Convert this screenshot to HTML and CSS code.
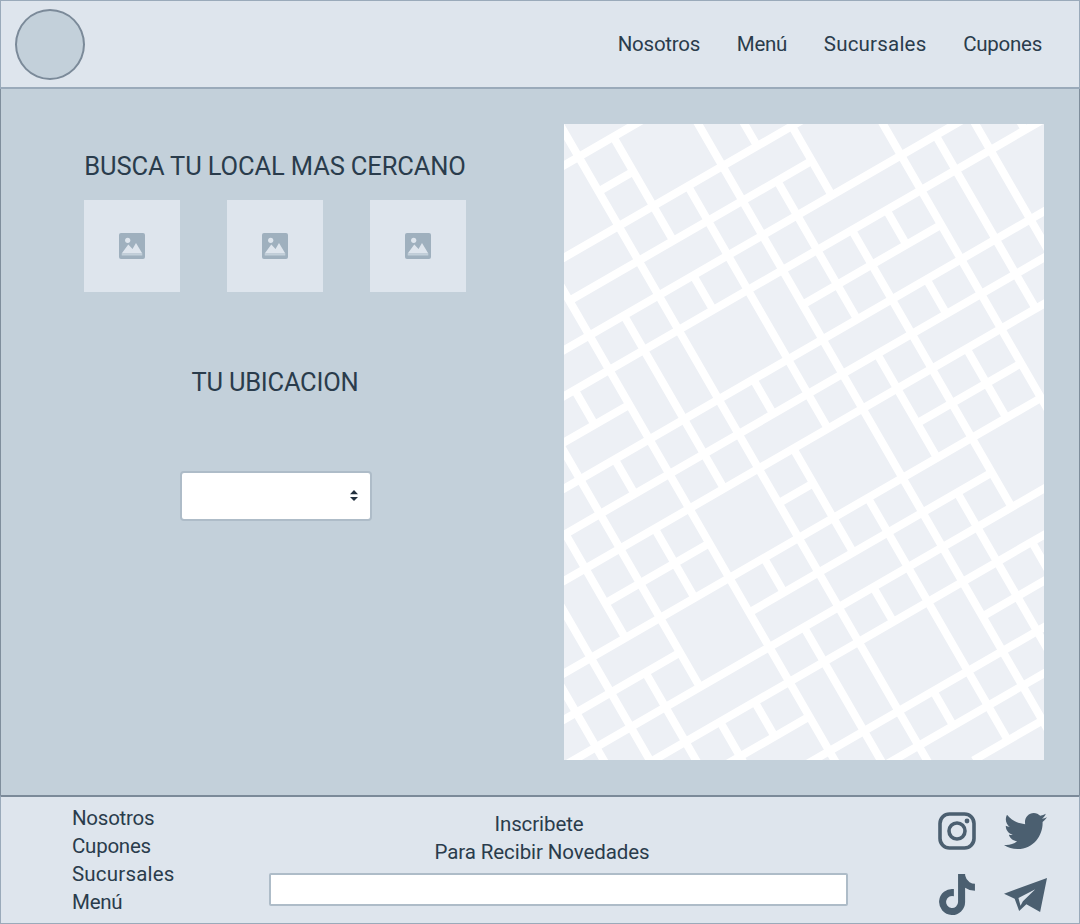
FILE: index.html
```html
<!DOCTYPE html>
<html lang="es">
<head>
<meta charset="utf-8">
<title>Sucursales</title>
<link rel="stylesheet" href="styles.css">
</head>
<body>
<div class="page">
  <header class="topbar">
    <div class="logo"></div>
    <nav class="nav">
      <a>Nosotros</a>
      <a>Menú</a>
      <a class="wide">Sucursales</a>
      <a>Cupones</a>
    </nav>
  </header>
  <main class="main">
    <section class="finder">
      <div class="search-block">
        <h2 class="title">BUSCA TU LOCAL MAS CERCANO</h2>
        <div class="thumbs">
          <div class="thumb"><svg class="thumb-icon" viewBox="0 0 26 26"><rect width="26" height="26" rx="2" fill="#9fb0be"/><circle cx="8.7" cy="7.3" r="2.6" fill="#dee5ed"/><path d="M2.7 20.5 9.3 11.5 13.5 16 17 10 23.3 20.5z" fill="#dee5ed"/><rect x="2.7" y="20.5" width="20.6" height="2" fill="#c3d0da"/></svg></div>
          <div class="thumb"><svg class="thumb-icon" viewBox="0 0 26 26"><rect width="26" height="26" rx="2" fill="#9fb0be"/><circle cx="8.7" cy="7.3" r="2.6" fill="#dee5ed"/><path d="M2.7 20.5 9.3 11.5 13.5 16 17 10 23.3 20.5z" fill="#dee5ed"/><rect x="2.7" y="20.5" width="20.6" height="2" fill="#c3d0da"/></svg></div>
          <div class="thumb"><svg class="thumb-icon" viewBox="0 0 26 26"><rect width="26" height="26" rx="2" fill="#9fb0be"/><circle cx="8.7" cy="7.3" r="2.6" fill="#dee5ed"/><path d="M2.7 20.5 9.3 11.5 13.5 16 17 10 23.3 20.5z" fill="#dee5ed"/><rect x="2.7" y="20.5" width="20.6" height="2" fill="#c3d0da"/></svg></div>
        </div>
      </div>
      <h2 class="title title-location">TU UBICACION</h2>
      <div class="select-wrap">
        <select class="select" aria-label="Ubicación"></select>
        <svg class="select-arrows" viewBox="0 0 8 12" preserveAspectRatio="none"><path d="M4 0 8 4.5H0zM4 12 0 7.5H8z" fill="#22303e"/></svg>
      </div>
    </section>
    <svg class="map" viewBox="0 12 1440 1908" width="480" height="636">
      <rect x="0" y="12" width="1440" height="1908" fill="#edf0f5"/>
      <g transform="rotate(-30) translate(-17.3 117.6) scale(120)" fill="none" stroke="#fff" stroke-width=".2">
        <path d="M-9 0H3M0 1H1M-9 2H8M-2 3H5M-9 4H11M-9 5H12M-9 6H-2M3 6H7M-9 7H12M-9 8H12M-9 9H12M-5 10H-2M0 10H1M4 10H7M-9 11H7M-9 12H-4M-2 12H5M-9 13H12M-6 14H12M-5 15H-2M3 15H12M-3 16H12M-1 17H12M1 18H12"/>
        <path d="M-7 -1V21M-6 8V21M-5 8V11M-5 12V21M-4 6V13M-4 14V16M-3 5V6M-3 7V8M-3 9V11M-3 14V15M-2 1V21M-1 4V9M-1 11V12M-1 13V21M0 -2V21M1 0V3M1 4V5M1 7V8M1 9V12M1 13V14M1 16V17M2 2V9M2 11V18M3 -2V21M4 -2V2M4 3V7M4 8V11M4 12V17M5 2V4M5 5V13M5 14V17M6 5V6M6 7V8M6 9V11M7 -2V21M8 4V9M9 -2V21M10 3V5"/>
      </g>
    </svg>
  </main>
  <footer class="footer">
    <nav class="foot-links">
      <a>Nosotros</a>
      <a>Cupones</a>
      <a class="wide">Sucursales</a>
      <a>Menú</a>
    </nav>
    <form class="subscribe">
      <p class="sub-line sub-line-short">Inscribete</p>
      <p class="sub-line">Para Recibir Novedades</p>
      <input class="sub-input" type="text" aria-label="Correo">
    </form>
    <div class="socials">
      <svg class="social" viewBox="0 0 38 38"><rect x="2" y="2" width="34" height="34" rx="9.5" fill="none" stroke="#4b5f70" stroke-width="3.6"/><circle cx="19" cy="19" r="8" fill="none" stroke="#4b5f70" stroke-width="3.6"/><circle cx="29" cy="9" r="2.4" fill="#4b5f70"/></svg>
      <svg class="social social-bird" viewBox="0 48 512 416" preserveAspectRatio="none"><path fill="#4b5f70" d="M459.37 151.716c.325 4.548.325 9.097.325 13.645 0 138.72-105.583 298.558-298.558 298.558-59.452 0-114.68-17.219-161.137-47.106 8.447.974 16.568 1.299 25.34 1.299 49.055 0 94.213-16.568 130.274-44.832-46.132-.975-84.792-31.188-98.112-72.772 6.498.974 12.995 1.624 19.818 1.624 9.421 0 18.843-1.3 27.614-3.573-48.081-9.747-84.143-51.98-84.143-102.985v-1.299c13.969 7.797 30.214 12.67 47.431 13.319-28.264-18.843-46.781-51.005-46.781-87.391 0-19.492 5.197-37.36 14.294-52.954 51.655 63.675 129.3 105.258 216.365 109.807-1.624-7.797-2.599-15.918-2.599-24.04 0-57.828 46.782-104.934 104.934-104.934 30.213 0 57.502 12.67 76.67 33.137 23.715-4.548 46.456-13.32 66.599-25.34-7.798 24.366-24.366 44.833-46.132 57.827 21.117-2.273 41.584-8.122 60.426-16.243-14.292 20.791-32.161 39.308-52.628 54.253z"/></svg>
      <svg class="social social-tiktok" viewBox="0 0 448 512"><path fill="#4b5f70" d="M448,209.91a210.06,210.06,0,0,1-122.77-39.25V349.38A162.55,162.55,0,1,1,185,188.31V278.2a74.62,74.62,0,1,0,52.23,71.18V0l88,0a121.18,121.18,0,0,0,1.86,22.17h0A122.18,122.18,0,0,0,381,102.39a121.43,121.43,0,0,0,67,20.14Z"/></svg>
      <svg class="social social-plane" viewBox="313 263 125 102" preserveAspectRatio="none"><path fill="#4b5f70" fill-rule="evenodd" d="M313 310 438 263 418 365 378 342 357 362 344 325ZM404 297 355 323 361 346 368 333Z"/></svg>
    </div>
  </footer>
</div>
</body>
</html>
```
FILE: styles.css
```css
* { box-sizing: border-box; }
html, body { margin: 0; padding: 0; }
body { font-family: Roboto, "Liberation Sans", sans-serif; color: #2a3c4c; }
.page { width: 1080px; height: 924px; display: flex; flex-direction: column; overflow: hidden; }
.wide { letter-spacing: .2px; }

.topbar { height: 89px; flex: none; display: flex; align-items: center; justify-content: space-between; padding: 0 37px 0 14px; background: #dee5ed; border: 1px solid #9aaaba; border-bottom-width: 2px; }
.logo { width: 70px; height: 71px; border-radius: 50%; background: #c3d0da; border: 2px solid #7b8a99; }
.nav { display: flex; gap: 36.7px; font-size: 20.5px; letter-spacing: -.25px; }
.nav .wide { letter-spacing: .2px; }

.main { flex: 1; min-height: 0; display: flex; background: #c3d0da; border-left: 1px solid #7f8e9c; border-right: 1px solid #7f8e9c; padding-top: 35px; }
.finder { width: 548px; flex: none; display: flex; flex-direction: column; align-items: center; padding-top: 26px; }
.search-block { width: 382px; }
.title { margin: 0; font-size: 25.5px; line-height: 32px; font-weight: 400; text-align: center; white-space: nowrap; letter-spacing: -.13px; }
.thumbs { display: flex; justify-content: space-between; margin-top: 18px; }
.thumb { width: 96px; height: 92px; background: #dee5ed; display: flex; align-items: center; justify-content: center; }
.thumb-icon { width: 26px; height: 26px; }
.title-location { margin-top: 74px; letter-spacing: -.25px; }
.select-wrap { position: relative; margin: 73px 0 0 2px; width: 192px; height: 50px; }
.select { display: block; width: 100%; height: 100%; appearance: none; background: #fff; border: 2px solid #aebcc8; border-radius: 4px; }
.select-arrows { position: absolute; right: 14px; top: 19px; width: 8px; height: 11px; }
.map { display: block; flex: none; margin-left: 15px; }

.footer { height: 129px; flex: none; display: flex; background: #dee5ed; border: 1px solid #9aaaba; border-top: 2px solid #7b8a99; }
.foot-links { display: flex; flex-direction: column; width: 268px; flex: none; padding: 7px 0 0 71px; font-size: 20.5px; line-height: 28px; letter-spacing: -.25px; }
.foot-links .wide { letter-spacing: .2px; }
.subscribe { width: 579px; flex: none; padding-top: 13px; }
.sub-line { margin: 0; padding-right: 33px; font-size: 20.5px; line-height: 28px; text-align: center; letter-spacing: -.1px; }
.sub-line-short { padding-right: 39px; }
.sub-input { display: block; width: 100%; height: 33px; margin-top: 7px; background: #fff; border: 2px solid #aebcc8; border-radius: 2px; padding: 0; }
.socials { margin-left: 90px; width: 109px; display: grid; grid-template-columns: 38px 43px; column-gap: 28px; grid-template-rows: 38px 43px; row-gap: 23px; padding-top: 15px; }
.social { display: block; width: 100%; height: 100%; }
.social-bird { height: 36px; align-self: center; }
.social-tiktok { height: 41px; align-self: center; }
.social-plane { height: 34px; align-self: center; }
```
